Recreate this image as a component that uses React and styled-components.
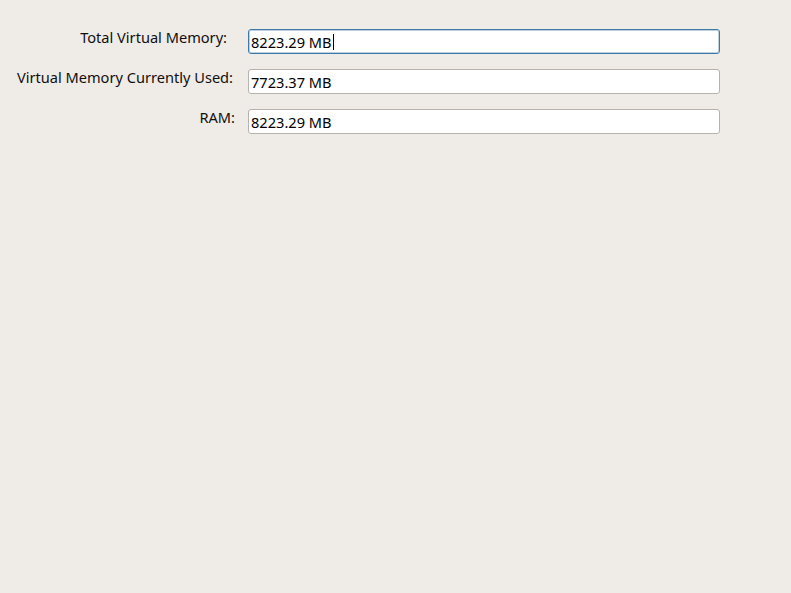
import React from "react";
import styled, { createGlobalStyle } from "styled-components";

const GlobalStyle = createGlobalStyle`
	html, body {
		margin: 0;
		padding: 0;
		background: #efebe7;
		font-family: "Noto Sans", "DejaVu Sans", sans-serif;
	}
	#root {
		min-height: 593px;
	}
`;

const Form = styled.div`
	display: grid;
	grid-template-columns: 229px 472px;
	row-gap: 15px;
	padding: 29px 0 0 19px;
`;

// labels sit near the top of their row, not centred on the entry
const Label = styled.div`
	display: flex;
	align-items: flex-start;
	justify-content: flex-end;
	padding-right: ${props => props.pad}px;
	font-size: 14.6px;
	line-height: 16px;
	color: #101010;
	white-space: nowrap;
`;

const Field = styled.div`
	box-sizing: border-box;
	height: 25px;
	display: flex;
	align-items: center;
	padding: 0 2px;
	background: #ffffff;
	border: 1px solid ${props => (props.focused ? "#3f77a8" : "#b7b2ad")};
	box-shadow: ${props =>
		props.focused ? "inset 0 0 0 1px rgba(63, 119, 168, 0.35)" : "none"};
	border-radius: 3px;
	font-size: 14.6px;
	color: #000;
`;

const Caret = styled.span`
	display: inline-block;
	width: 1px;
	height: 16px;
	margin-left: 1px;
	background: #000;
`;

const rows = [
	{ label: "Total Virtual Memory:", value: "8223.29 MB", pad: 21, focused: true },
	{ label: "Virtual Memory Currently Used:", value: "7723.37 MB", pad: 15 },
	{ label: "RAM:", value: "8223.29 MB", pad: 13 }
];

const App = () => {
	return (
		<>
			<GlobalStyle />
			<Form>
				{rows.map(row => (
					<React.Fragment key={row.label}>
						<Label pad={row.pad}>{row.label}</Label>
						<Field focused={row.focused}>
							{row.value}
							{row.focused && <Caret />}
						</Field>
					</React.Fragment>
				))}
			</Form>
		</>
	);
};

export default App;
